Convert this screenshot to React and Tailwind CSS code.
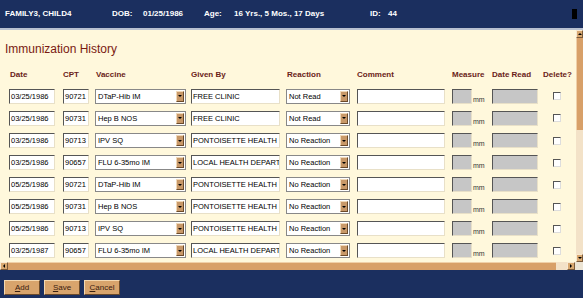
import React from "react";

const rows = [
  { date: "03/25/1986", cpt: "90721", vaccine: "DTaP-Hib IM", given: "FREE CLINIC", reaction: "Not Read" },
  { date: "03/25/1986", cpt: "90731", vaccine: "Hep B NOS", given: "FREE CLINIC", reaction: "Not Read" },
  { date: "03/25/1986", cpt: "90713", vaccine: "IPV SQ", given: "PONTOISETTE HEALTH", reaction: "No Reaction" },
  { date: "03/25/1986", cpt: "90657", vaccine: "FLU 6-35mo IM", given: "LOCAL HEALTH DEPARTMENT", reaction: "No Reaction" },
  { date: "05/25/1986", cpt: "90721", vaccine: "DTaP-Hib IM", given: "PONTOISETTE HEALTH", reaction: "No Reaction" },
  { date: "05/25/1986", cpt: "90731", vaccine: "Hep B NOS", given: "PONTOISETTE HEALTH", reaction: "No Reaction" },
  { date: "05/25/1986", cpt: "90713", vaccine: "IPV SQ", given: "PONTOISETTE HEALTH", reaction: "No Reaction" },
  { date: "03/25/1987", cpt: "90657", vaccine: "FLU 6-35mo IM", given: "LOCAL HEALTH DEPARTMENT", reaction: "No Reaction" },
];

const cols = "grid grid-cols-[54px_32px_96px_95px_71px_95px_40px_54px_30px] items-center";
const inset = "h-[15px] border border-t-[#555] border-l-[#555] border-b-[#e8e0c8] border-r-[#e8e0c8] overflow-hidden whitespace-nowrap leading-[13px] text-[7.5px] px-[1px]";

function Box({ w, children, grey }) {
  return (
    <div className={`${inset} ${w} ${grey ? "bg-[#c6c6c6]" : "bg-white"} text-black`}>
      {children}
    </div>
  );
}

function Select({ w, children }) {
  return (
    <div className={`h-[15px] ${w} bg-white border border-[#888] flex items-center text-[7.5px] text-black`}>
      <span className="flex-1 min-w-0 px-[2px] overflow-hidden whitespace-nowrap">{children}</span>
      <span className="shrink-0 w-[8px] h-[11px] mr-[1px] bg-[#c89868] border border-t-[#f0d8b8] border-l-[#f0d8b8] border-b-[#6b4a2a] border-r-[#6b4a2a] flex items-center justify-center">
        <span className="w-0 h-0 border-l-[2px] border-r-[2px] border-t-[2px] border-l-transparent border-r-transparent border-t-black" />
      </span>
    </div>
  );
}

export default function App() {
  return (
    <div className="w-[583px] h-[298px] flex flex-col overflow-hidden font-['Liberation_Sans',Arial,sans-serif]">
      <div className="h-[28px] bg-[#1b2f5f] flex items-center text-white font-bold text-[8px] pl-[5px] relative">
        <span className="w-[107px]">FAMILY3, CHILD4</span>
        <span className="w-[31px]">DOB:</span>
        <span className="w-[61px]">01/25/1986</span>
        <span className="w-[30px]">Age:</span>
        <span className="w-[136px]">16 Yrs., 5 Mos., 17 Days</span>
        <span className="w-[18px]">ID:</span>
        <span>44</span>
        <span className="absolute left-[572px] top-[9px] w-[5px] h-[10px] bg-black" />
      </div>
      <div className="h-[2px] bg-[#b8c0d0]" />
      <div className="flex h-[232px]">
        <div className="flex-1 bg-[#fff8dc] flex flex-col">
          <div className="h-[34px] pl-[5px] pt-[10px] text-[12px] text-[#7a1a12]">Immunization History</div>
          <div className={`${cols} pl-[9px] h-[22px] text-[8px] font-bold text-[#6a2218]`}>
            <span className="pl-[1px]">Date</span>
            <span>CPT</span>
            <span className="pl-[1px]">Vaccine</span>
            <span>Given By</span>
            <span className="pl-[1px]">Reaction</span>
            <span>Comment</span>
            <span>Measure</span>
            <span>Date Read</span>
            <span className="-ml-[3px]">Delete?</span>
          </div>
          {rows.map((r, i) => (
            <div key={i} className={`${cols} pl-[9px] h-[22.4px]`}>
              <Box w="w-[46px]">{r.date}</Box>
              <Box w="w-[26px]">{r.cpt}</Box>
              <Select w="w-[91px]">{r.vaccine}</Select>
              <Box w="w-[89px]">{r.given}</Box>
              <Select w="w-[64px]">{r.reaction}</Select>
              <Box w="w-[88px]"></Box>
              <div className="flex items-end">
                <Box w="w-[20px]" grey></Box>
                <span className="text-[7px] text-[#333] ml-[1px] leading-[8px]">mm</span>
              </div>
              <Box w="w-[46px]" grey></Box>
              <span className="ml-[7px] w-[8px] h-[8px] bg-white border border-t-[#555] border-l-[#555] border-b-[#ddd] border-r-[#ddd]" />
            </div>
          ))}
        </div>
        <div className="w-[8px] bg-[#f3e2c8] flex flex-col">
          <div className="h-[8px] bg-[#d8a870] border border-[#f8e8d0] border-b-[#7a5a3a] border-r-[#7a5a3a] flex items-center justify-center">
            <span className="w-0 h-0 border-l-[2px] border-r-[2px] border-b-[2px] border-l-transparent border-r-transparent border-b-black" />
          </div>
          <div className="h-[92px] bg-[#d8a068] border-l border-[#f0d0a8]" />
          <div className="flex-1" />
          <div className="h-[8px] bg-[#d8a870] border border-[#f8e8d0] border-b-[#7a5a3a] border-r-[#7a5a3a] flex items-center justify-center">
            <span className="w-0 h-0 border-l-[2px] border-r-[2px] border-t-[2px] border-l-transparent border-r-transparent border-t-black" />
          </div>
        </div>
      </div>
      <div className="h-[8px] flex bg-[#f3e2c8]">
        <div className="w-[8px] bg-[#d8a870] border border-[#f8e8d0] border-b-[#7a5a3a] border-r-[#7a5a3a] flex items-center justify-center">
          <span className="w-0 h-0 border-t-[2px] border-b-[2px] border-r-[2px] border-t-transparent border-b-transparent border-r-black" />
        </div>
        <div className="w-[548px] bg-[#d8a068] border-t border-[#f0d0a8]" />
        <div className="flex-1" />
        <div className="w-[8px] bg-[#d8a870] border border-[#f8e8d0] border-b-[#7a5a3a] border-r-[#7a5a3a] flex items-center justify-center">
          <span className="w-0 h-0 border-t-[2px] border-b-[2px] border-l-[2px] border-t-transparent border-b-transparent border-l-black" />
        </div>
        <div className="w-[8px] bg-[#ece4d4]" />
      </div>
      <div className="flex-1 bg-[#1b2f5f] flex items-center gap-[4px] pl-[4px] pt-[6px]">
        {["Add", "Save", "Cancel"].map((b) => (
          <button key={b} className="w-[36px] h-[15px] bg-[#d8a46c] border border-t-[#f4d8b0] border-l-[#f4d8b0] border-b-[#6b4a2a] border-r-[#6b4a2a] text-[8px] text-[#3a2010] leading-[13px]">
            <span className="underline">{b[0]}</span>{b.slice(1)}
          </button>
        ))}
      </div>
    </div>
  );
}
